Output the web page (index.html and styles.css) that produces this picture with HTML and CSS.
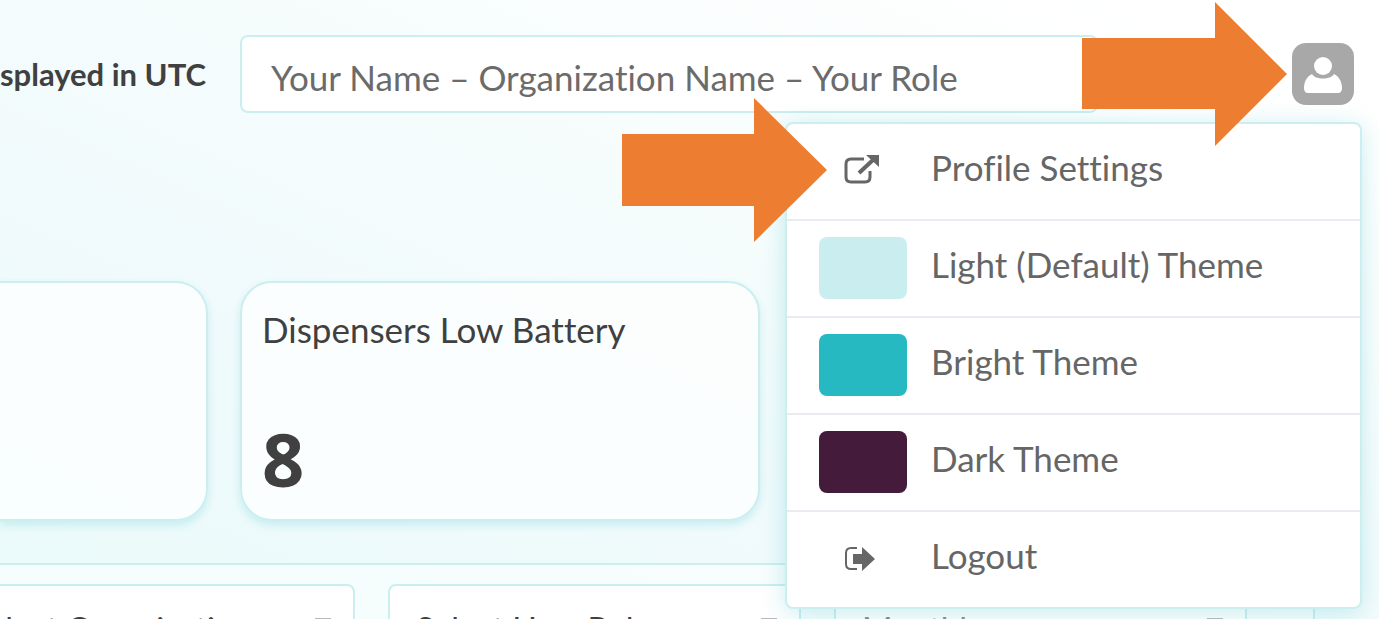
FILE: index.html
```html
<!DOCTYPE html>
<html lang="en">
<head>
  <meta charset="UTF-8">
  <title>Dispensers</title>
  <meta name="viewport" content="width=device-width, initial-scale=1.0">
  <link rel="stylesheet" href="styles.css">
</head>
<body>
  <header class="topbar">
    <label class="utc-label" for="accountInput">displayed in UTC</label>
    <input class="account-input" id="accountInput" type="text" value="Your Name – Organization Name – Your Role">
    <div class="profile">
      <button class="profile-btn" type="button" aria-label="Profile">
        <svg viewBox="0 0 62 62" width="62" height="62">
          <circle cx="31" cy="23" r="9" fill="#fff"/>
          <path d="M20 31C23 37 39 37 42 31C48 34 50 40 50 45Q50 50 46 50H16Q12 50 12 45C12 40 14 34 20 31Z" fill="#fff"/>
        </svg>
      </button>
      <nav class="menu">
        <a class="menu-item" href="#">
          <span class="menu-icon">
            <svg viewBox="0 0 36 32" width="36" height="32" fill="none" stroke="#666" stroke-width="3">
              <path d="M20 6H7Q2 6 2 11V24Q2 29 7 29H21Q26 29 26 24V18"/>
              <path d="M15 20L30 6" stroke-width="4"/>
              <path d="M22 2H35V14Z" fill="#666" stroke="none"/>
            </svg>
          </span>
          <span class="menu-text">Profile Settings</span>
        </a>
        <button class="menu-item" type="button"><span class="swatch light"></span><span class="menu-text">Light (Default) Theme</span></button>
        <button class="menu-item" type="button"><span class="swatch bright"></span><span class="menu-text">Bright Theme</span></button>
        <button class="menu-item" type="button"><span class="swatch dark"></span><span class="menu-text">Dark Theme</span></button>
        <a class="menu-item" href="#">
          <span class="menu-icon">
            <svg viewBox="0 0 36 32" width="36" height="32">
              <path d="M13 7H7Q2 7 2 12V23Q2 28 7 28H13" fill="none" stroke="#666" stroke-width="2"/>
              <path d="M9 13H18V6L31 18L18 30V23H9Z" fill="#666"/>
            </svg>
          </span>
          <span class="menu-text">Logout</span>
        </a>
      </nav>
      <svg class="arrow arrow-profile" viewBox="0 0 205 144"><path d="M0 36H133V0L205 72L133 144V107H0Z"/></svg>
      <svg class="arrow arrow-settings" viewBox="0 0 205 144"><path d="M0 36H132V0L205 72L132 144V108H0Z"/></svg>
    </div>
  </header>
  <main>
    <section class="cards">
      <div class="card card-cut"></div>
      <div class="card">
        <div class="card-title">Dispensers Low Battery</div>
        <div class="card-value">8</div>
      </div>
    </section>
    <section class="filters">
      <select class="filter" aria-label="Organization"><option>Select Organization</option></select>
      <select class="filter" aria-label="User role"><option>Select User Role</option></select>
      <select class="filter muted" aria-label="Period"><option>Monthly</option></select>
    </section>
  </main>
</body>
</html>
```
FILE: styles.css
```css
* { box-sizing: border-box; }
body { margin: 0; height: 100vh; overflow: hidden; font-family: Lato, "Open Sans", sans-serif; font-size: 35px; font-variant-ligatures: none; color: #404040; background: linear-gradient(to top right, #eafafa, #f0fafc 30%, #f5fcfc 55%, #fff 90%); }
button, input, select { font: inherit; font-variant-ligatures: none; color: inherit; }

.topbar { display: flex; align-items: center; padding: 35px 25px 0 0; }
.utc-label { flex: 0 0 206px; min-width: 0; display: flex; justify-content: flex-end; white-space: nowrap; font-size: 31px; font-weight: 700; }
.account-input { flex: 1; min-width: 0; height: 78px; margin: 0 194px 0 34px; padding: 5px 29px 0; border: 2px solid #cbeef0; border-radius: 8px; background: #fff; color: #6b6b6b; }
.profile { position: relative; flex: none; }
.profile-btn { display: block; width: 62px; height: 62px; padding: 0; border: none; border-radius: 14px; background: #a8a8a8; cursor: pointer; }

.menu { position: absolute; top: 79px; right: -8px; z-index: 10; width: 577px; border: 2px solid #cbeef0; border-radius: 8px; background: #fff; box-shadow: 0 4px 24px rgba(38,185,193,0.25); }
.menu-item { display: flex; align-items: center; gap: 24px; width: 100%; height: 97px; padding: 0 32px 2px; border: none; border-bottom: 2px solid #e8ebef; background: none; color: #666; text-align: left; text-decoration: none; cursor: pointer; }
.menu-item:last-child { height: 95px; border-bottom: none; }
.menu-icon { width: 88px; padding: 0 0 4px 25px; line-height: 0; }
.menu-text { padding-bottom: 8px; }
.swatch { width: 88px; height: 62px; border-radius: 8px; }
.swatch.light { background: #caeef0; }
.swatch.bright { background: #26b9c1; }
.swatch.dark { background: #441b3b; }

.arrow { position: absolute; z-index: 20; width: 205px; height: 144px; fill: #ed7d31; }
.arrow-profile { top: -41px; right: 67px; }
.arrow-settings { top: 55px; right: 527px; }

.cards { display: grid; grid-template-columns: 208px 520px; gap: 32px; margin-top: 168px; }
.card { height: 240px; padding: 26px 20px; border: 2px solid #cbeef0; border-radius: 32px; background: rgba(255,255,255,0.7); box-shadow: 0 4px 8px rgba(38,185,193,0.2); }
.card-cut { border-left: none; border-top-left-radius: 0; border-bottom-left-radius: 0; }
.card-title { line-height: 40px; }
.card-value { margin-top: 64px; font-family: "Open Sans", sans-serif; font-size: 74px; line-height: 92px; font-weight: 700; }

.filters { display: flex; justify-content: flex-end; gap: 33px; margin: 42px 64px 0 0; padding: 19px 66px 19px 0; border: 2px solid #cbeef0; border-left: none; background: rgba(255,255,255,0.5); }
.filter { flex: 0 0 413px; height: 88px; padding: 0 26px; border: 2px solid #cbeef0; border-radius: 8px; appearance: none; background: #fff linear-gradient(#bbb, #bbb) no-repeat right 22px top 32px / 16px 3px; font-size: 33px; }
.filter.muted { color: #888; }
```
